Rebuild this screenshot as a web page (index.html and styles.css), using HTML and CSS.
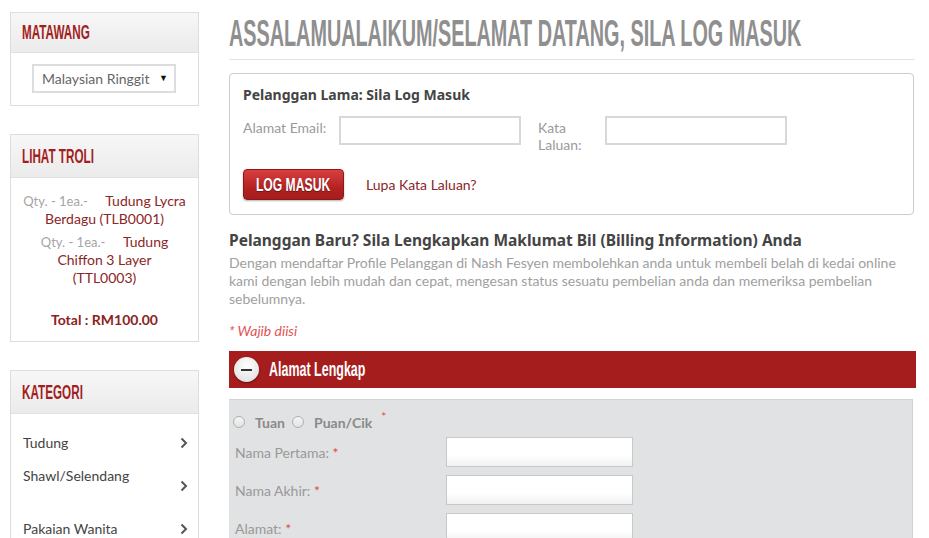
FILE: index.html
```html
<!DOCTYPE html>
<html lang="ms">
<head>
    <meta charset="UTF-8">
    <meta name="viewport" content="width=device-width, initial-scale=1.0">
    <title>Log Masuk - Nash Fesyen</title>
    <link rel="stylesheet" href="styles.css">
</head>
<body>
    <div class="page">
        <aside class="sidebar">
            <!-- Currency -->
            <div class="box box-currency">
                <div class="box-head"><span class="cond">MATAWANG</span></div>
                <div class="currency">
                    <div class="select">
                        <span>Malaysian Ringgit</span>
                        <span class="arrow">&#9660;</span>
                    </div>
                </div>
            </div>

            <!-- Cart -->
            <div class="box">
                <div class="box-head"><span class="cond">LIHAT TROLI</span></div>
                <div class="cart">
                    <p class="cart-item"><span class="qty">Qty. - 1ea.-</span>&nbsp;&nbsp;&nbsp;&nbsp; <a href="#">Tudung Lycra<br>Berdagu (TLB0001)</a></p>
                    <p class="cart-item"><span class="qty">Qty. - 1ea.-</span>&nbsp;&nbsp;&nbsp;&nbsp; <a href="#">Tudung<br>Chiffon 3 Layer<br>(TTL0003)</a></p>
                    <p class="cart-total">Total : RM100.00</p>
                </div>
            </div>

            <!-- Categories -->
            <div class="box">
                <div class="box-head"><span class="cond">KATEGORI</span></div>
                <ul class="cat-list">
                    <li><span class="cat-name">Tudung</span><svg class="chev" width="8" height="12" viewBox="0 0 8 12"><polyline points="1.5,1.5 6,6 1.5,10.5" /></svg></li>
                    <li class="tall"><span class="cat-name">Shawl/Selendang</span><svg class="chev" width="8" height="12" viewBox="0 0 8 12"><polyline points="1.5,1.5 6,6 1.5,10.5" /></svg></li>
                    <li><span class="cat-name">Pakaian Wanita</span><svg class="chev" width="8" height="12" viewBox="0 0 8 12"><polyline points="1.5,1.5 6,6 1.5,10.5" /></svg></li>
                </ul>
            </div>
        </aside>

        <main class="main">
            <h1 class="page-title"><span class="cond">ASSALAMUALAIKUM/SELAMAT DATANG, SILA LOG MASUK</span></h1>

            <div class="login-box">
                <h3>Pelanggan Lama: Sila Log Masuk</h3>
                <div class="login-row">
                    <label class="lbl-email" for="email">Alamat Email:</label>
                    <input type="text" id="email">
                    <label class="lbl-pass" for="pass">Kata Laluan:</label>
                    <input type="password" id="pass">
                </div>
                <div class="login-actions">
                    <button type="button" class="btn-red"><span class="cond">LOG MASUK</span></button>
                    <a href="#" class="forgot">Lupa Kata Laluan?</a>
                </div>
            </div>

            <h2 class="new-title">Pelanggan Baru? Sila Lengkapkan Maklumat Bil (Billing Information) Anda</h2>
            <p class="intro">Dengan mendaftar Profile Pelanggan di Nash Fesyen membolehkan anda untuk membeli belah di kedai online kami dengan lebih mudah dan cepat, mengesan status sesuatu pembelian anda dan memeriksa pembelian sebelumnya.</p>
            <p class="required">* Wajib diisi</p>

            <div class="section-bar">
                <span class="toggle"><span class="minus"></span></span>
                <span class="cond">Alamat Lengkap</span>
            </div>

            <div class="form-panel">
                <div class="title-row">
                    <input type="radio" name="title" id="tuan"><label for="tuan">Tuan</label>
                    <input type="radio" name="title" id="puan"><label for="puan">Puan/Cik</label>
                    <sup class="star">*</sup>
                </div>
                <div class="form-grid">
                    <label>Nama Pertama: <span class="star">*</span></label>
                    <input type="text">
                    <label>Nama Akhir: <span class="star">*</span></label>
                    <input type="text">
                    <label>Alamat: <span class="star">*</span></label>
                    <input type="text">
                </div>
            </div>
        </main>
    </div>
</body>
</html>
```

FILE: styles.css
```css
* {
    box-sizing: border-box;
}

body {
    margin: 0;
    background-color: #fff;
    font-family: Lato, "Noto Sans", sans-serif;
    font-size: 14px;
    color: #444;
}

a {
    color: #8b2626;
    text-decoration: none;
}

/* condensed display type (headings, buttons) */
.cond {
    display: inline-block;
    white-space: nowrap;
    font-family: "Liberation Sans", Arial, sans-serif;
    font-weight: bold;
    transform-origin: 0 50%;
}

.page {
    display: flex;
    gap: 30px;
    padding: 12px 0 0 10px;
}

/* ---------- sidebar ---------- */
.sidebar {
    width: 189px;
    flex-shrink: 0;
}

.box {
    border: 1px solid #ddd;
    background-color: #fff;
    margin-bottom: 28px;
}

.box-head {
    height: 43px;
    padding-left: 11px;
    display: flex;
    align-items: center;
    overflow: hidden;
    background: linear-gradient(#f7f7f7, #ebebeb);
    border-bottom: 1px solid #e0e0e0;
}

.box-currency .box-head {
    height: 40px;
}

.box-head .cond {
    font-size: 19.5px;
    color: #a21f1f;
    transform: scaleX(.6);
}

.currency {
    padding: 11px 0 12px 21px;
}

.select {
    width: 144px;
    height: 29px;
    border: 2px solid #ddd;
    display: flex;
    align-items: center;
    justify-content: space-between;
    padding: 0 6px 0 8px;
    color: #666;
    font-size: 14px;
}

.select .arrow {
    font-size: 9px;
    color: #111;
    margin-top: -2px;
}

.cart {
    padding: 14px 6px 12px;
    text-align: center;
    line-height: 18px;
}

.cart-item {
    margin: 0 0 5px;
}

.cart-item .qty {
    color: #a5a5a5;
    font-size: 13px;
}

.cart-total {
    margin: 24px 0 0;
    font-weight: bold;
    color: #8b2323;
}

.cat-list {
    list-style: none;
    margin: 0;
    padding: 19px 10px 0 12px;
}

.cat-list li {
    display: flex;
    align-items: center;
    justify-content: space-between;
    line-height: 20px;
    margin-bottom: 13px;
    color: #444;
}

.cat-list li.tall .cat-name {
    height: 40px;
}

.chev polyline {
    fill: none;
    stroke: #555;
    stroke-width: 2;
}

/* ---------- main column ---------- */
.main {
    width: 686px;
}

.page-title {
    margin: 1px 0 0;
    padding-bottom: 7px;
    border-bottom: 1px solid #e2e2e2;
    overflow: hidden;
    font-size: 37.5px;
    line-height: 38px;
    font-weight: normal;
}

.page-title .cond {
    color: #8f8f8f;
    transform: scaleX(.528);
}

.login-box {
    margin-top: 13px;
    width: 685px;
    border: 1px solid #ccc;
    border-radius: 4px;
    padding: 11px 13px 14px;
}

.login-box h3 {
    margin: 0 0 11px;
    font-family: "Noto Sans", Lato, sans-serif;
    font-size: 14px;
    line-height: 20px;
    color: #444;
}

.login-row {
    display: flex;
    align-items: flex-start;
}

.login-row label {
    color: #9a9a9a;
    line-height: 17px;
    padding-top: 3px;
}

.lbl-email {
    width: 96px;
}

.lbl-pass {
    width: 50px;
    margin: 0 17px 0 17px;
}

.login-row input {
    width: 182px;
    height: 29px;
    border: 2px solid #d8d8d8;
    background-color: #fff;
    font-size: 14px;
}

.login-actions {
    display: flex;
    align-items: center;
    margin-top: 16px;
}

.btn-red {
    width: 101px;
    height: 31px;
    padding: 0;
    overflow: hidden;
    display: flex;
    align-items: center;
    justify-content: center;
    border: 1px solid #8f1717;
    border-radius: 4px;
    background: linear-gradient(#d94040, #b42222 60%, #a51c1c);
    box-shadow: 0 1px 2px rgba(0, 0, 0, 0.3);
    cursor: pointer;
}

.btn-red .cond {
    flex-shrink: 0;
    font-size: 19px;
    color: #fff;
    text-shadow: 0 1px 1px rgba(0, 0, 0, 0.4);
    transform-origin: 50% 50%;
    transform: scaleX(.64);
}

.forgot {
    margin-left: 22px;
}

.new-title {
    margin: 15px 0 0;
    font-family: "Noto Sans", Lato, sans-serif;
    font-size: 15.5px;
    line-height: 20px;
    color: #444;
}

.intro {
    margin: 4px 0 0;
    line-height: 18px;
    color: #a0a0a0;
}

.required {
    margin: 14px 0 0;
    line-height: 18px;
    font-style: italic;
    color: #e05252;
}

.section-bar {
    margin-top: 11px;
    height: 37px;
    width: 687px;
    overflow: hidden;
    background-color: #a61d1d;
    display: flex;
    align-items: center;
    padding-left: 5px;
    gap: 10px;
}

.toggle {
    width: 25px;
    height: 25px;
    flex-shrink: 0;
    border-radius: 50%;
    background: radial-gradient(circle at 50% 35%, #fff, #e6e6e6 70%, #cfcfcf);
    box-shadow: 0 1px 2px rgba(0, 0, 0, 0.4);
    display: flex;
    align-items: center;
    justify-content: center;
}

.toggle .minus {
    width: 11px;
    height: 2px;
    background-color: #333;
}

.section-bar .cond {
    font-size: 19.5px;
    color: #fff;
    transform: scaleX(.64);
}

.form-panel {
    margin-top: 11px;
    width: 684px;
    height: 150px;
    background-color: #e1e2e3;
    border-top: 1px solid #d2d2d2;
    border-right: 1px solid #d2d2d2;
    padding: 12px 6px;
}

.title-row {
    display: flex;
    align-items: center;
    height: 20px;
    color: #8a8a8a;
    font-weight: bold;
}

.title-row input {
    appearance: none;
    width: 12px;
    height: 12px;
    margin: 0 10px 0 -2px;
    border: 1px solid #b0b0b0;
    border-radius: 50%;
    background: linear-gradient(#f6f6f6, #e2e2e2);
}

.title-row label {
    margin-right: 9px;
}

.star {
    color: #e04848;
    font-weight: normal;
}

.title-row .star {
    margin-left: 0;
    align-self: flex-start;
    margin-top: -3px;
}

.form-grid {
    margin-top: 5px;
    display: grid;
    grid-template-columns: 211px 187px;
    row-gap: 8px;
    align-items: center;
}

.form-grid label {
    color: #999;
}

.form-grid input {
    width: 187px;
    height: 30px;
    border: 1px solid #c8c8c8;
    background: linear-gradient(#fff 60%, #f1f1f1);
    font-size: 14px;
}
```
